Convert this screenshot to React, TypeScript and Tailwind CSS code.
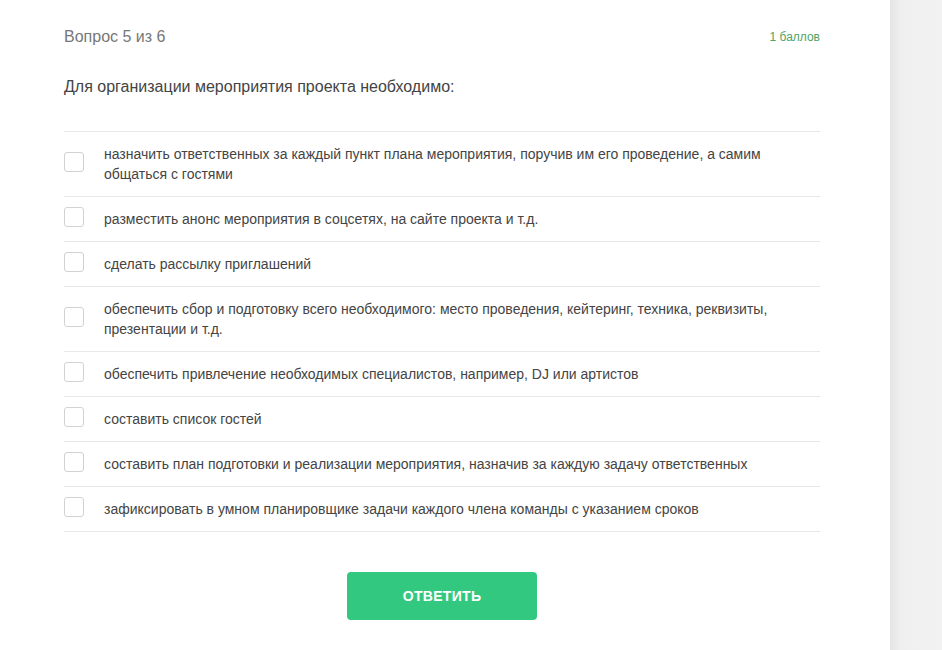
import React from "react";

const options: string[] = [
  "назначить ответственных за каждый пункт плана мероприятия, поручив им его проведение, а самим общаться с гостями",
  "разместить анонс мероприятия в соцсетях, на сайте проекта и т.д.",
  "сделать рассылку приглашений",
  "обеспечить сбор и подготовку всего необходимого: место проведения, кейтеринг, техника, реквизиты, презентации и т.д.",
  "обеспечить привлечение необходимых специалистов, например, DJ или артистов",
  "составить список гостей",
  "составить план подготовки и реализации мероприятия, назначив за каждую задачу ответственных",
  "зафиксировать в умном планировщике задачи каждого члена команды с указанием сроков",
];

export default function App() {
  return (
    <div
      className="flex w-[942px] h-[650px] overflow-hidden bg-white"
      style={{ fontFamily: '"Liberation Sans", Arial, sans-serif' }}
    >
      <div className="w-[890px] shrink-0 bg-white pl-[64px] pr-[70px] pt-[27px]">
        <div className="flex items-center justify-between">
          <div className="text-[16px] leading-[20px] text-[#777777]">Вопрос 5 из 6</div>
          <div className="text-[12px] leading-[20px] text-[#4fa464]">1 баллов</div>
        </div>
        <div className="mt-[30px] text-[16px] leading-[20px] text-[#444444]">
          Для организации мероприятия проекта необходимо:
        </div>
        <div className="mt-[34px] border-t border-[#e8e8e8]">
          {options.map((o, i) => (
            <label
              key={i}
              className="flex items-center border-b border-[#e8e8e8] py-[12px]"
            >
              <span className="w-[20px] h-[20px] shrink-0 -translate-y-[2px] rounded-[3px] border border-[#d2d2d2] bg-white" />
              <span className="ml-[20px] text-[14px] leading-[20px] text-[#444444]">{o}</span>
            </label>
          ))}
        </div>
        <div className="mt-[40px] flex justify-center">
          <button className="w-[190px] h-[48px] rounded-[4px] bg-[#33c87f] text-white text-[14px] font-bold tracking-[0.3px]">
            ОТВЕТИТЬ
          </button>
        </div>
      </div>
      <div className="flex-1 bg-gradient-to-r from-[#e4e4e4] via-[#efefef] to-[#f2f2f2] via-20%" />
    </div>
  );
}
